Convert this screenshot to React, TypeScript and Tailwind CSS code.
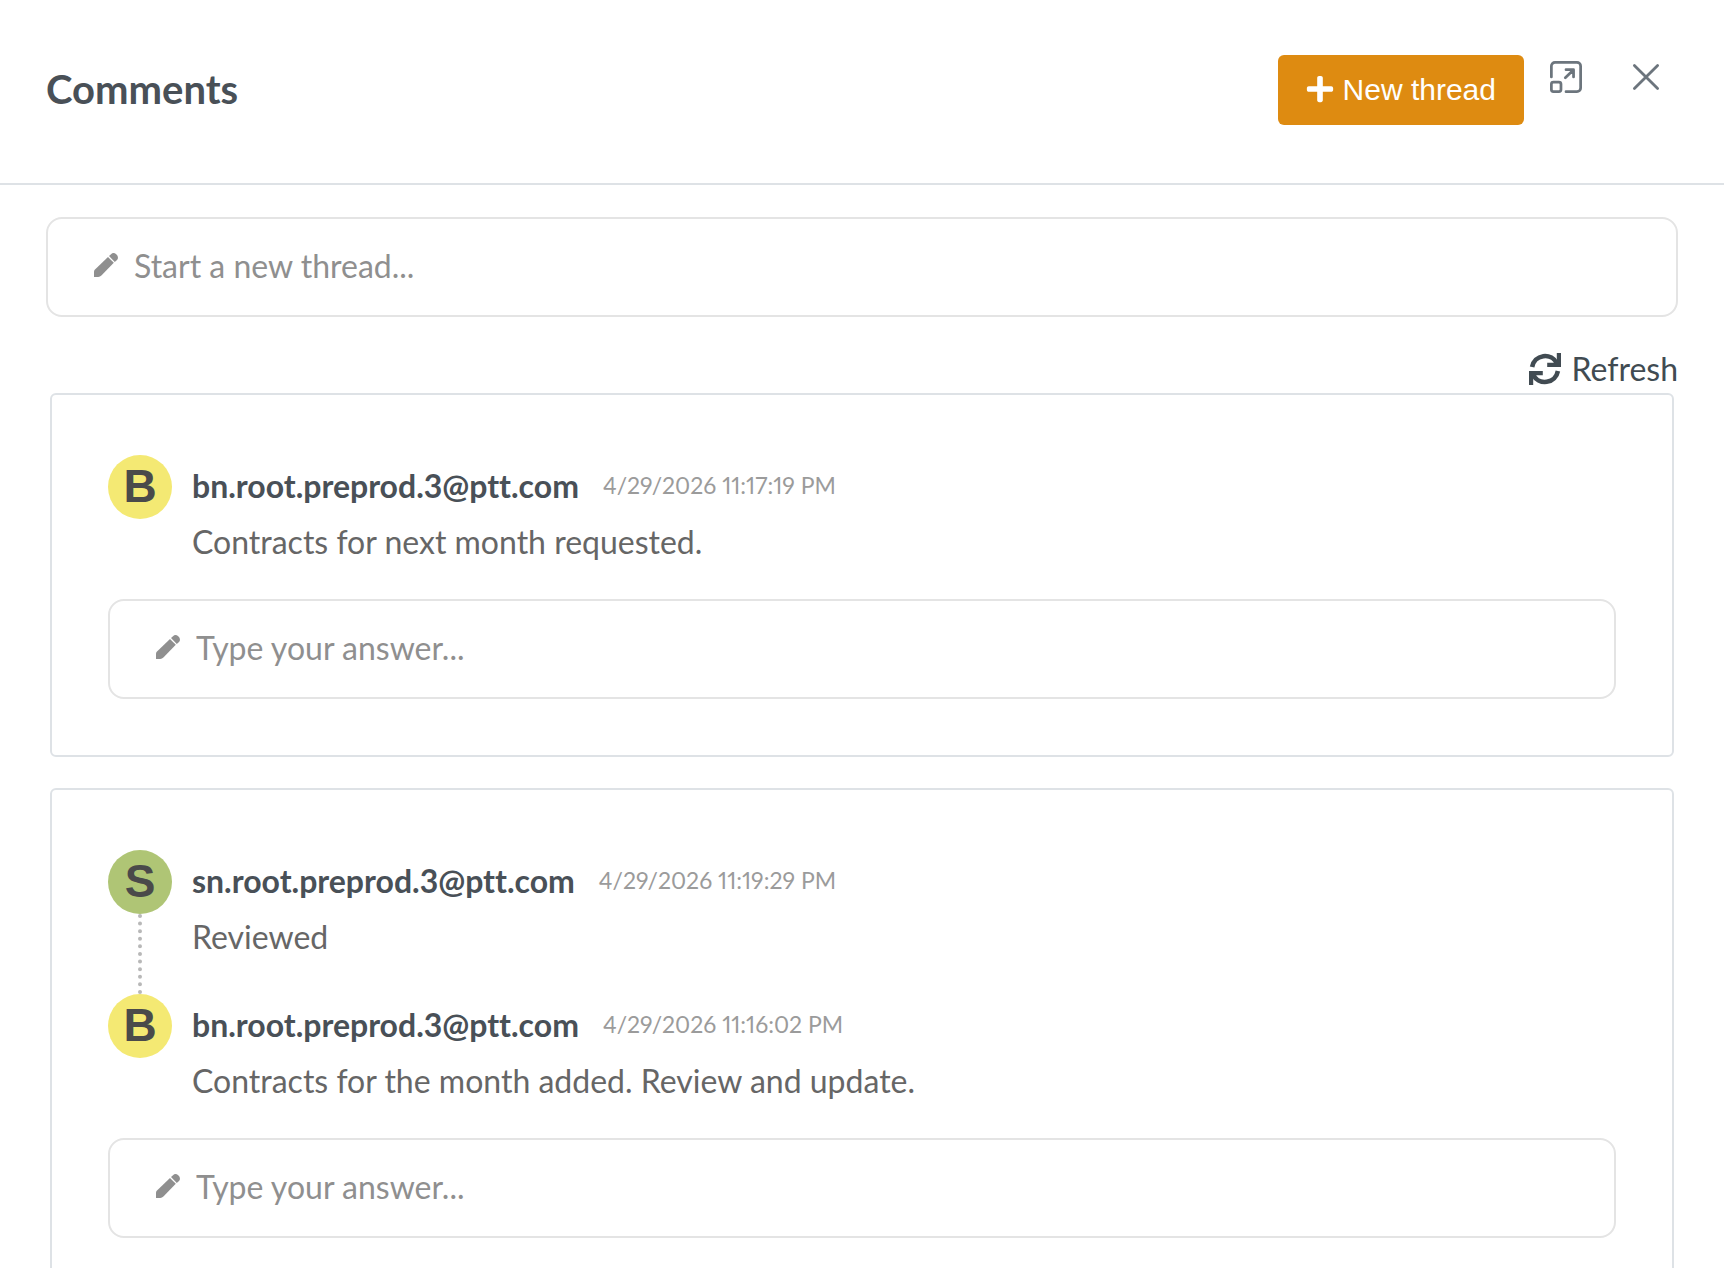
import { useState } from "react";
import { FaPlus } from "react-icons/fa";

interface Comment {
  id: number;
  author: string;
  date: string;
  text: string;
}

interface Thread {
  id: number;
  comments: Comment[];
}

const THREADS: Thread[] = [
  {
    id: 1,
    comments: [
      {
        id: 11,
        author: "bn.root.preprod.3@ptt.com",
        date: "4/29/2026 11:17:19 PM",
        text: "Contracts for next month requested.",
      },
    ],
  },
  {
    id: 2,
    comments: [
      {
        id: 21,
        author: "sn.root.preprod.3@ptt.com",
        date: "4/29/2026 11:19:29 PM",
        text: "Reviewed",
      },
      {
        id: 22,
        author: "bn.root.preprod.3@ptt.com",
        date: "4/29/2026 11:16:02 PM",
        text: "Contracts for the month added. Review and update.",
      },
    ],
  },
];

const AVATAR_COLORS: Record<string, string> = {
  B: "bg-[#f4e973]",
  S: "bg-[#afc575]",
};

function PencilIcon() {
  return (
    <svg viewBox="0 0 24 24" className="mb-0.5 size-6 shrink-0" fill="currentColor" aria-hidden="true">
      <path d="M0 24v-5.2c0-.9.3-1.7 1-2.4L14 4l5.800 5.800L7.400 22.600c-.9.9-2 1.400-3.200 1.400z" />
      <path d="M15 3.100 17 1.200c1.500-1.600 3.500-1.600 5.200.1 1.900 1.700 2.400 3.900.8 5.600l-2.200 2z" />
    </svg>
  );
}

function RefreshIcon() {
  return (
    <svg viewBox="0 0 32 32" className="size-8 shrink-0" aria-hidden="true">
      <g fill="none" stroke="currentColor" strokeWidth="4.600">
        <path d="M3.100 14A13.200 13.200 0 0 1 28 10.500" />
        <path d="M28.900 18A13.200 13.200 0 0 1 4 21.500" />
      </g>
      <path fill="currentColor" d="M27.800 0H32v14H18.200v-4.200h6.300L27.800 7z" />
      <path fill="currentColor" d="M4.200 32H0V18h13.800v4.200H7.500L4.200 25z" />
    </svg>
  );
}

function MaximizeIcon() {
  return (
    <svg
      viewBox="0 0 14 14"
      className="size-8"
      fill="none"
      stroke="currentColor"
      strokeWidth="1.200"
      strokeLinecap="round"
      strokeLinejoin="round"
      aria-hidden="true"
    >
      <path d="M.6 7V2.200A1.600 1.600 0 0 1 2.200.6h9.600a1.600 1.600 0 0 1 1.600 1.600v9.600a1.600 1.600 0 0 1-1.600 1.600H7" />
      <rect x=".6" y="9.200" width="4.200" height="4.200" rx=".9" />
      <path d="M7 3.800h3.300V7M10.200 3.900 6.700 7.300" />
    </svg>
  );
}

function CloseIcon() {
  return (
    <svg
      viewBox="0 0 28 28"
      className="size-7"
      fill="none"
      stroke="currentColor"
      strokeWidth="2.800"
      strokeLinecap="round"
      aria-hidden="true"
    >
      <path d="M2.400 2.400l23.200 23.200M25.600 2.400 2.400 25.600" />
    </svg>
  );
}

function CommentInput({ label }: { label: string }) {
  const [value, setValue] = useState("");

  return (
    <label className="flex h-[100px] items-center gap-4 rounded-2xl border-2 border-[#e4e4e4] px-[46px] pb-0.5 text-[#8f8f8f]">
      <PencilIcon />
      <input
        type="text"
        aria-label={label}
        placeholder={label}
        value={value}
        onChange={(e) => setValue(e.target.value)}
        className="min-w-0 flex-1 text-[32px] text-[#4a4a4a] outline-none placeholder:text-[#8f8f8f]"
      />
    </label>
  );
}

function CommentItem({ comment, linked }: { comment: Comment; linked: boolean }) {
  const initial = comment.author.charAt(0).toUpperCase();

  return (
    <li className="flex h-36 gap-5">
      <div className="flex flex-col items-center">
        <div
          className={`flex size-16 shrink-0 items-center justify-center rounded-full pb-0.5 font-['Liberation_Sans',sans-serif] text-[46px] leading-none font-bold text-[#4a4a4a] ${AVATAR_COLORS[initial]}`}
        >
          {initial}
        </div>
        {linked && <div className="flex-1 border-l-4 border-dotted border-[#b8b8b8]" />}
      </div>
      <div className="min-w-0 flex-1">
        <div className="flex h-[62px] items-center gap-6">
          <span className="text-[32px] font-bold text-[#495057]">{comment.author}</span>
          <time className="pb-0.5 text-[23px] text-[#9b9b9b]">{comment.date}</time>
        </div>
        <p className="text-[32px] leading-[50px] text-[#666666]">{comment.text}</p>
      </div>
    </li>
  );
}

export default function App() {
  return (
    <div className="h-screen overflow-hidden bg-white font-[Lato,sans-serif] proportional-nums [font-variant-ligatures:none]">
      {/* Header */}
      <header className="flex h-[185px] items-start border-b-2 border-[#dee2e6] pt-[55px] pr-[64px] pl-[46px]">
        <h1 className="flex-1 text-[40px] leading-[68px] font-bold text-[#495057]">Comments</h1>
        <button
          type="button"
          className="flex h-[70px] items-center gap-2 rounded-md bg-[#de8b11] pr-7 pb-0.5 pl-[27px] font-['Liberation_Sans',sans-serif] text-[30px] text-white"
        >
          <FaPlus className="size-[30px]" />
          New thread
        </button>
        <button type="button" aria-label="Maximize" className="mt-1.5 ml-[26px] text-[#6c757d]">
          <MaximizeIcon />
        </button>
        <button type="button" aria-label="Close" className="mt-2 ml-[50px] text-[#6c757d]">
          <CloseIcon />
        </button>
      </header>

      <main className="px-[46px] pt-8">
        <CommentInput label="Start a new thread..." />

        <div className="mt-7 flex justify-end">
          <button type="button" className="flex h-12 items-center gap-2.5 text-[32px] text-[#414b52]">
            <RefreshIcon />
            Refresh
          </button>
        </div>

        {/* Threads */}
        <div className="flex flex-col gap-[31px] px-1">
          {THREADS.map((thread) => (
            <section
              key={thread.id}
              className="rounded-md border-2 border-[#dee2e6] px-14 pt-[60px] pb-14"
            >
              <ul>
                {thread.comments.map((comment, index) => (
                  <CommentItem
                    key={comment.id}
                    comment={comment}
                    linked={index < thread.comments.length - 1}
                  />
                ))}
              </ul>
              <CommentInput label="Type your answer..." />
            </section>
          ))}
        </div>
      </main>
    </div>
  );
}
